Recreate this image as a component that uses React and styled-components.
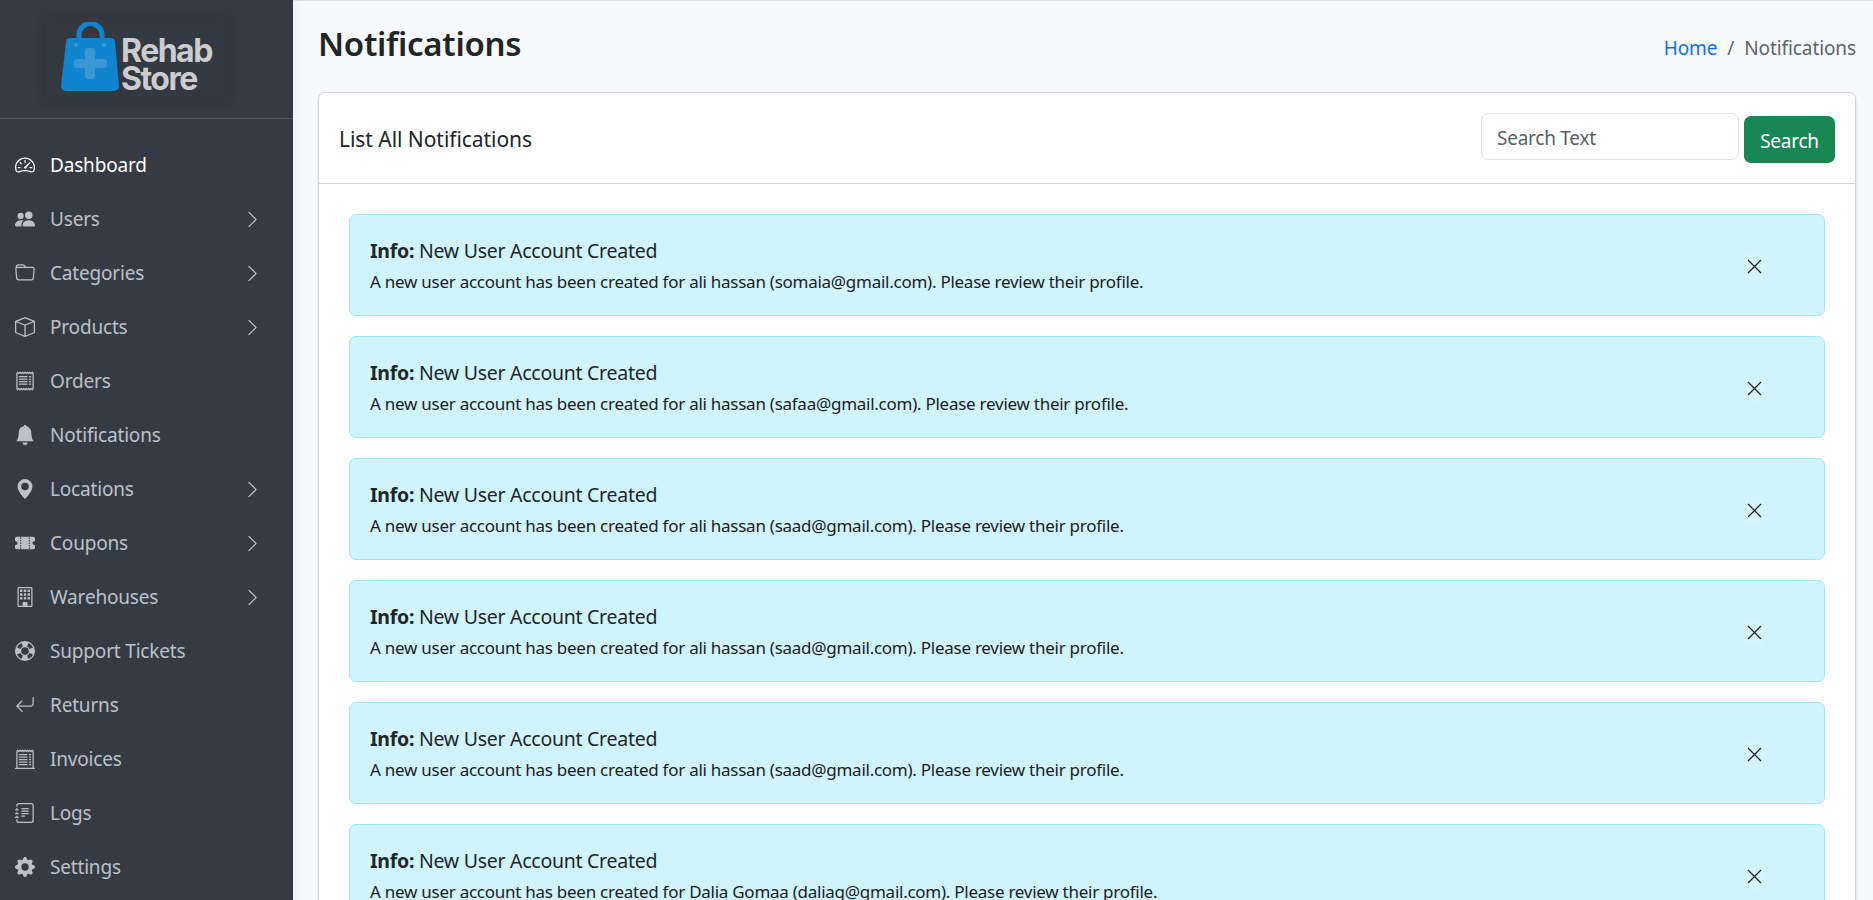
import React from "react";
import styled, { createGlobalStyle } from "styled-components";
import {
  BsSpeedometer2, BsPeopleFill, BsFolder, BsBox, BsReceipt, BsBellFill, BsGeoAltFill,
  BsTicketPerforatedFill, BsBuilding, BsLifePreserver, BsArrowReturnLeft, BsReceiptCutoff,
  BsJournalText, BsGearFill, BsChevronRight,
} from "react-icons/bs";

const Global = createGlobalStyle`
  html, body { margin: 0; padding: 0; height: 100%; overflow: hidden; }
  body { font-family: "Noto Sans", "Open Sans", sans-serif; color: #212529; background: #f8f9fa; }
  * { box-sizing: border-box; }
`;

const Shell = styled.div`
  display: flex;
  width: 1873px;
  height: 900px;
  overflow: hidden;
`;

const Sidebar = styled.aside`
  flex: 0 0 293px;
  background: #353a43;
  display: flex;
  flex-direction: column;
`;

const Brand = styled.div`
  height: 119px;
  border-bottom: 1px solid #4b5059;
  padding: 17px 0 0 45px;
`;

const LogoBox = styled.div`
  width: 183px;
  height: 85px;
  background: #343840;
  box-shadow: 0 0 8px rgba(40, 44, 50, 0.35);
  display: flex;
  align-items: flex-start;
  padding: 5px 0 0 16px;
  gap: 1px;
`;

const LogoText = styled.div`
  font-family: "Inter", "Liberation Sans", sans-serif;
  font-weight: 700;
  font-size: 32px;
  line-height: 28px;
  letter-spacing: -1.5px;
  color: #cbcdcf;
  margin-top: 15px;
`;

const Nav = styled.nav`
  display: flex;
  flex-direction: column;
  padding-top: 19px;
`;

const NavItem = styled.div`
  height: 54px;
  display: flex;
  align-items: center;
  padding-left: 15px;
  color: ${(p) => (p.$active ? "#ffffff" : "#bcc1c9")};
  font-size: 19px;
  letter-spacing: -0.18px;
`;

const NavIcon = styled.span`
  flex: 0 0 35px;
  display: flex;
  align-items: center;
  font-size: 20px;
`;

const NavLabel = styled.span`
  flex: 1;
`;

const NavArrow = styled.span`
  display: flex;
  font-size: 19px;
  margin-right: 31px;
`;

const Main = styled.main`
  flex: 1;
  min-width: 0;
  background: #f8f9fa;
  border-top: 1px solid #dee2e6;
  padding: 0 17px 0 25px;
  box-shadow: inset 12px 0 12px -12px rgba(0, 0, 0, 0.08);
`;

const PageHead = styled.div`
  height: 91px;
  display: flex;
  align-items: center;
  justify-content: space-between;
  padding: 0 0 6px 0;
`;

const Title = styled.h1`
  margin: 0;
  font-size: 33px;
  font-weight: 600;
  letter-spacing: -0.3px;
  color: #212529;
`;

const Crumbs = styled.div`
  display: flex;
  gap: 10px;
  font-size: 19px;
  letter-spacing: -0.1px;
  color: #5c636a;
  padding-top: 9px;
`;

const CrumbLink = styled.span`
  color: #0d6efd;
`;

const Card = styled.section`
  background: #fff;
  border: 1px solid #d3d5d8;
  border-radius: 7px;
  box-shadow: 0 1px 3px rgba(0, 0, 0, 0.12);
  height: 900px;
`;

const CardHead = styled.div`
  height: 91px;
  border-bottom: 1px solid #d3d5d8;
  display: flex;
  align-items: center;
  justify-content: space-between;
  padding: 0 20px;
`;

const CardTitle = styled.div`
  font-size: 21px;
  letter-spacing: -0.05px;
  color: #212529;
  padding-top: 2px;
`;

const SearchForm = styled.form`
  display: flex;
  align-items: flex-start;
  gap: 5px;
  margin: 2px 0 0;
`;

const SearchInput = styled.input`
  width: 258px;
  height: 47px;
  margin-top: -3px;
  padding: 3px 14px 0 15px;
  border: 1px solid #dee2e6;
  border-radius: 7px;
  font: inherit;
  font-size: 19px;
  letter-spacing: -0.25px;
  color: #212529;
  outline: none;
  &::placeholder { color: #595f66; opacity: 1; }
`;

const SearchButton = styled.button`
  width: 91px;
  height: 47px;
  border: 0;
  border-radius: 7px;
  background: #198754;
  color: #fff;
  font: inherit;
  font-size: 19px;
  letter-spacing: -0.25px;
  padding: 3px 0 0;
`;

const CardBody = styled.div`
  display: flex;
  flex-direction: column;
  gap: 20px;
  padding: 30px 30px 0;
`;

const Alert = styled.div`
  height: 102px;
  background: #cff4fc;
  border: 1px solid #9eeaf9;
  border-radius: 7px;
  display: flex;
  align-items: center;
  padding: 4px 60px 0 20px;
  color: #212529;
`;

const AlertText = styled.div`
  flex: 1;
`;

const AlertTitle = styled.div`
  font-size: 19.5px;
  line-height: 29px;
  letter-spacing: -0.27px;
`;

const AlertStrong = styled.strong`
  font-weight: 700;
`;

const AlertBody = styled.div`
  font-size: 17px;
  line-height: 33px;
  letter-spacing: -0.26px;
  color: #1d2023;
`;

const Close = styled.button`
  flex: 0 0 19px;
  height: 27px;
  padding: 0;
  border: 0;
  border-radius: 5px;
  background: #d3f5fd;
  color: #1c2024;
  display: flex;
  align-items: center;
  justify-content: center;
  margin-top: -1px;
`;

const CloseGlyph = () => (
  <svg width="15" height="15" viewBox="0 0 15 15" aria-hidden="true">
    <path d="M1 1l13 13M14 1L1 14" fill="none" stroke="currentColor" strokeWidth="1.2" />
  </svg>
);

const Logo = () => (
  <svg width="59" height="70" viewBox="0 0 59 70" aria-hidden="true">
    <path d="M18 18V13a11.500 11.500 0 0 1 23 0v5" fill="none" stroke="#0f84cf" strokeWidth="5" />
    <path d="M9 16h41a4 4 0 0 1 4 4l4 44a5 5 0 0 1-5 5H5a5 5 0 0 1-5-5l5-44a4 4 0 0 1 4-4z" fill="#0f84cf" />
    <circle cx="15" cy="23" r="2" fill="#3a97d4" />
    <circle cx="43" cy="23" r="2" fill="#3a97d4" />
    <path d="M25 32a3 3 0 0 1 3-3h4a3 3 0 0 1 3 3v8h9a3 3 0 0 1 3 3v3a3 3 0 0 1-3 3h-9v8a3 3 0 0 1-3 3h-4a3 3 0 0 1-3-3v-8h-8a3 3 0 0 1-3-3v-3a3 3 0 0 1 3-3h8z" fill="#3a97d4" transform="translate(-1 -3)" />
  </svg>
);

const navItems = [
  { label: "Dashboard", Icon: BsSpeedometer2, active: true },
  { label: "Users", Icon: BsPeopleFill, arrow: true },
  { label: "Categories", Icon: BsFolder, arrow: true },
  { label: "Products", Icon: BsBox, arrow: true },
  { label: "Orders", Icon: BsReceipt },
  { label: "Notifications", Icon: BsBellFill },
  { label: "Locations", Icon: BsGeoAltFill, arrow: true },
  { label: "Coupons", Icon: BsTicketPerforatedFill, arrow: true },
  { label: "Warehouses", Icon: BsBuilding, arrow: true },
  { label: "Support Tickets", Icon: BsLifePreserver },
  { label: "Returns", Icon: BsArrowReturnLeft },
  { label: "Invoices", Icon: BsReceiptCutoff },
  { label: "Logs", Icon: BsJournalText },
  { label: "Settings", Icon: BsGearFill },
];

const alerts = [
  "ali hassan (somaia@gmail.com)",
  "ali hassan (safaa@gmail.com)",
  "ali hassan (saad@gmail.com)",
  "ali hassan (saad@gmail.com)",
  "ali hassan (saad@gmail.com)",
  "Dalia Gomaa (daliag@gmail.com)",
];

export default function App() {
  return (
    <Shell>
      <Global />
      <Sidebar>
        <Brand>
          <LogoBox>
            <Logo />
            <LogoText>Rehab<br />Store</LogoText>
          </LogoBox>
        </Brand>
        <Nav>
          {navItems.map(({ label, Icon, active, arrow }) => (
            <NavItem key={label} $active={active}>
              <NavIcon><Icon /></NavIcon>
              <NavLabel>{label}</NavLabel>
              {arrow && <NavArrow><BsChevronRight /></NavArrow>}
            </NavItem>
          ))}
        </Nav>
      </Sidebar>
      <Main>
        <PageHead>
          <Title>Notifications</Title>
          <Crumbs>
            <CrumbLink>Home</CrumbLink>
            <span>/</span>
            <span>Notifications</span>
          </Crumbs>
        </PageHead>
        <Card>
          <CardHead>
            <CardTitle>List All Notifications</CardTitle>
            <SearchForm>
              <SearchInput placeholder="Search Text" />
              <SearchButton type="button">Search</SearchButton>
            </SearchForm>
          </CardHead>
          <CardBody>
            {alerts.map((who, i) => (
              <Alert key={i}>
                <AlertText>
                  <AlertTitle><AlertStrong>Info:</AlertStrong> New User Account Created</AlertTitle>
                  <AlertBody>A new user account has been created for {who}. Please review their profile.</AlertBody>
                </AlertText>
                <Close type="button" aria-label="Close"><CloseGlyph /></Close>
              </Alert>
            ))}
          </CardBody>
        </Card>
      </Main>
    </Shell>
  );
}
